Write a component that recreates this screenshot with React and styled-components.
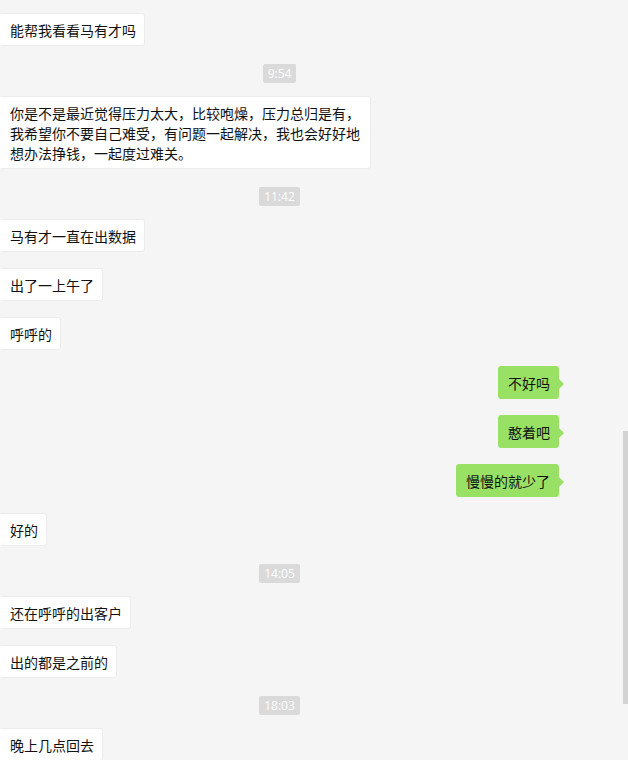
import React from "react";
import styled, { createGlobalStyle } from "styled-components";

const messages = [
  { type: "in", text: "能帮我看看马有才吗" },
  { type: "time", text: "9:54" },
  {
    type: "in",
    text: "你是不是最近觉得压力太大，比较咆燥，压力总归是有，我希望你不要自己难受，有问题一起解决，我也会好好地想办法挣钱，一起度过难关。",
  },
  { type: "time", text: "11:42" },
  { type: "in", text: "马有才一直在出数据" },
  { type: "in", text: "出了一上午了" },
  { type: "in", text: "呼呼的" },
  { type: "out", text: "不好吗" },
  { type: "out", text: "憨着吧" },
  { type: "out", text: "慢慢的就少了" },
  { type: "in", text: "好的" },
  { type: "time", text: "14:05" },
  { type: "in", text: "还在呼呼的出客户" },
  { type: "in", text: "出的都是之前的" },
  { type: "time", text: "18:03" },
  { type: "in", text: "晚上几点回去" },
];

export default function App() {
  return (
    <>
      <GlobalStyle />
      <Window>
        <MessageList>
          {messages.map((m, i) =>
            m.type === "time" ? (
              <TimeRow key={i}>
                <TimeLabel>{m.text}</TimeLabel>
              </TimeRow>
            ) : (
              <Row key={i} $out={m.type === "out"}>
                <Bubble $out={m.type === "out"}>{m.text}</Bubble>
              </Row>
            )
          )}
        </MessageList>
        <ScrollThumb />
      </Window>
    </>
  );
}

const GlobalStyle = createGlobalStyle`
  html, body {
    margin: 0;
    padding: 0;
    background: #f5f5f5;
  }
  * {
    box-sizing: border-box;
  }
`;

const Window = styled.div`
  position: relative;
  width: 628px;
  height: 760px;
  overflow: hidden;
  background: #f5f5f5;
  font-family: "Noto Sans CJK SC", "Noto Sans", sans-serif;
`;

const MessageList = styled.div`
  display: flex;
  flex-direction: column;
  width: 559px;
  padding-top: 13px;
`;

const Row = styled.div`
  display: flex;
  justify-content: ${(p) => (p.$out ? "flex-end" : "flex-start")};
  margin-bottom: 16px;
`;

const Bubble = styled.div`
  position: relative;
  max-width: 371px;
  padding: 6px 8px 5px 9px;
  font-size: 14px;
  line-height: 20px;
  color: #111;
  background: ${(p) => (p.$out ? "#98e165" : "#fff")};
  border: 1px solid ${(p) => (p.$out ? "#98e165" : "#ececec")};
  border-left-color: ${(p) => (p.$out ? "#98e165" : "#fff")};
  border-radius: ${(p) => (p.$out ? "3px" : "0 3px 3px 0")};

  ${(p) =>
    p.$out &&
    `
    &::after {
      content: "";
      position: absolute;
      right: -6px;
      top: 12px;
      border: 5px solid transparent;
      border-right: 0;
      border-left: 5px solid #98e165;
    }
  `}
`;

const TimeRow = styled.div`
  display: flex;
  justify-content: center;
  margin: 2px 0 13px;
`;

const TimeLabel = styled.span`
  padding: 0 5px;
  height: 19px;
  line-height: 19px;
  font-family: "Open Sans", "Liberation Sans", sans-serif;
  font-size: 12px;
  color: #fff;
  background: #dadada;
  border-radius: 2px;
`;

const ScrollThumb = styled.div`
  position: absolute;
  right: 0;
  top: 431px;
  width: 5px;
  height: 273px;
  background: #d3d3d3;
`;
